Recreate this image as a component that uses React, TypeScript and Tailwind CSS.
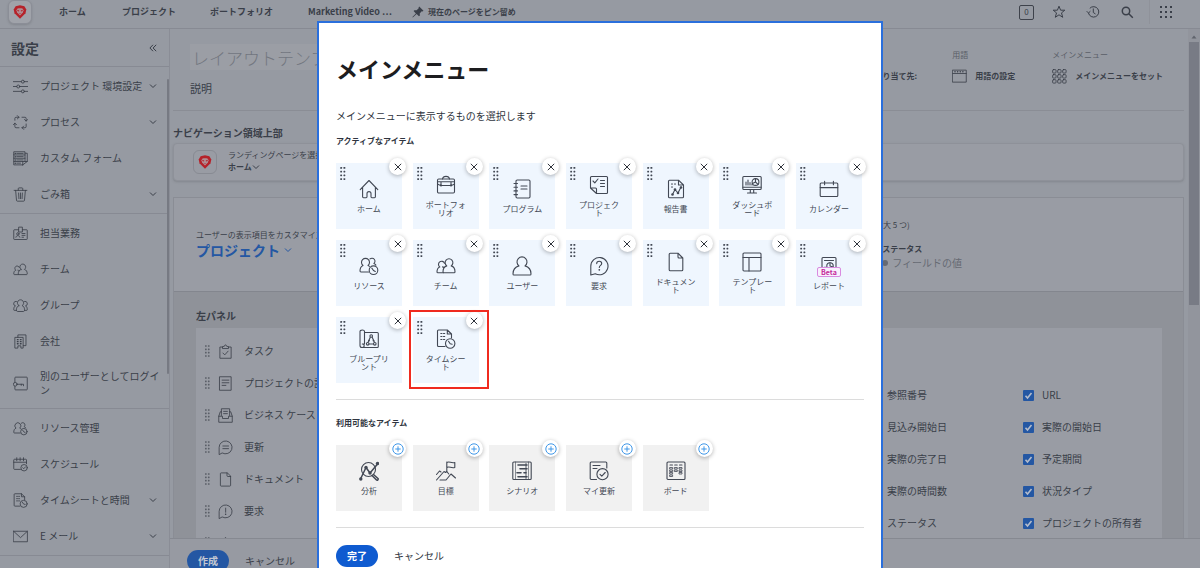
import React from "react";

type IconName = keyof typeof ICONS;

const dot = (x: number, y: number, r = 1) => <circle key={`${x}-${y}`} cx={x} cy={y} r={r} fill="currentColor" stroke="none" />;

const ICONS = {
  home: <path d="M1.2 10.6 10 1.5l8.8 9.1M3.6 8.6v9.2c0 .6.3.9.9.9h2.600c.6 0 .9-.3.9-.9v-3.200a2 2 0 0 1 4 0v3.200c0 .6.3.9.9.9h2.600c.6 0 .9-.3.9-.9V8.600" />,
  briefcase: (
    <>
      <rect x="1.500" y="4" width="17" height="14" rx="1.200" />
      <path d="M6.500 4c.3-1.800 1.500-2.600 3.500-2.600s3.200.8 3.500 2.600M1.500 6.800h17M1.800 9.200c1 1 2 1.300 3.500 1.300h9.400c1.500 0 2.500-.3 3.500-1.300M5 7v3.500M15 7v3.500" />
      {[dot(5, 10.5, 1.1), dot(15, 10.5, 1.1)]}
    </>
  ),
  notebook: (
    <>
      <rect x="4" y="1" width="14" height="18" rx="1.200" />
      <path d="M2 4.500h3.500M2 8.200h3.500M2 11.900h3.500M2 15.600h3.500M9 7h6M9 10h6" />
    </>
  ),
  checklist: (
    <>
      <path d="M1.500 13V2.500c0-.7.4-1 1-1h15c.6 0 1 .3 1 1v15c0 .6-.4 1-1 1H7.500L1.500 13h5c.7 0 1 .3 1 1v4.500" />
      <path d="m4 6 1.800 1.800L9 4M11.500 5.500h4M11.500 8.500h4M11.500 11.500h4" />
    </>
  ),
  report: (
    <>
      <path d="M12.500 1.200H3.500c-.6 0-1 .4-1 1v15.600c0 .6.4 1 1 1h13c.6 0 1-.4 1-1V6zM12.500 1.200V6h5M5.500 5h1M8.500 5h1M5.500 8h1" />
      <path d="m6.500 15.500 2.500-5 3 3.500 3-6" />
      {[dot(6.5, 15.5, 1.3), dot(9, 10.5, 1.3), dot(12, 14, 1.3), dot(15, 8.500, 1.3)]}
    </>
  ),
  dashboard: (
    <>
      <rect x="0.800" y="1.500" width="18.400" height="13" rx="1" />
      <path d="M1 12.300h18M8.300 14.500v3M11.700 14.500v3M5.500 18h9M4 10V7M6 10V5M8 10V7.500M10 10V9" />
      <circle cx="13.500" cy="7" r="3.400" />
      <path d="M13.500 3.600V7l2.500 2.300M13.500 7l-3 1.500" />
    </>
  ),
  calendar: (
    <>
      <rect x="1.200" y="4" width="17.600" height="13.500" rx="1" />
      <path d="M1.200 8.600h17.600M5.600 2.200v3.500M14.400 2.200v3.500" />
    </>
  ),
  resources: (
    <>
      <path d="M9.500 16H2c-.6 0-1-.3-1-.9 0-3 1-4.800 3-5.600a4 4 0 1 1 5 0c.6.2 1 .5 1.400.9M11 2.900a3 3 0 1 1 3.900 4.600c.9.300 1.500.800 2 1.600" />
      <circle cx="14.500" cy="14.200" r="4.300" />
      <path d="m12.800 12.200 1.700 2.300 1.800 1" />
    </>
  ),
  team: (
    <>
      <path d="M10.800 9.900a3.900 3.900 0 1 1 4.400 0c2.600.7 3.800 2.800 3.800 6 0 .6-.4.900-1 .9H8c-.6 0-1-.3-1-.9 0-3.200 1.200-5.300 3.800-6z" />
      <path d="M7.200 16.800H2c-.6 0-1-.3-1-.9 0-2.600.9-4.400 2.800-5a3.100 3.100 0 1 1 4.700-3.600M6.500 10.900c.6.100 1 .3 1.400.6" />
    </>
  ),
  user: <path d="M7 9.900a5 5 0 1 1 6 0c3.600 1 6 4 6 8 0 .7-.4 1.100-1 1.100H2c-.6 0-1-.4-1-1.100 0-4 2.400-7 6-8z" />,
  question: (
    <>
      <path d="M1.800 19V10.200a8.600 8.600 0 1 1 4.500 7.500z" />
      <path d="M7.700 7.600c0-1.400 1-2.300 2.500-2.300s2.500.9 2.500 2.200c0 1.900-2.400 1.900-2.400 4" />
      {dot(10.3, 13.8, 0.9)}
    </>
  ),
  document: <path d="M12 1.200H4.200c-.6 0-1 .4-1 1v15.600c0 .6.4 1 1 1h11.600c.6 0 1-.4 1-1V6zM12 1.200V5c0 .6.4 1 1 1h3.800" />,
  template: (
    <>
      <rect x="1" y="1" width="18" height="18" rx="1" />
      <path d="M1 5.500h18M7 5.500V19" />
    </>
  ),
  reportPage: (
    <>
      <path d="M3 14V2.500c0-.7.400-1 1-1h12c.6 0 1 .3 1 1V14M5.500 4.500h9" />
      <circle cx="11" cy="10" r="3.200" />
      <path d="M11 6.800V10l3 1M6 14v-3" />
    </>
  ),
  blueprint: (
    <>
      <path d="M5.500 3.500h12.800c.6 0 1 .4 1 1v13c0 .6-.4 1-1 1H3M5.500 15V2.500C5.500 1.600 4.600 1 3.300 1S1 1.600 1 2.500v14c0 1.200.8 2 2 2s2.200-.8 2.200-1.800c0-1-.8-1.700-1.900-1.700h2.200" />
      <path d="m11.200 8.500-2 4.500M13.300 8.500l2 4.500M10 15h4.500" />
      <circle cx="12.200" cy="7" r="1.300" />
      <circle cx="8.700" cy="14.800" r="1.300" />
      <circle cx="15.800" cy="14.800" r="1.300" />
      {[dot(10, 11.6, 0.9), dot(14.500, 11.600, 0.9)]}
    </>
  ),
  timesheet: (
    <>
      <path d="M9 17.500H2.500c-.6 0-1-.4-1-1V2c0-.6.4-1 1-1h8.800L15.500 5v4M11.300 1v4h4.200M4.800 4.500H6M7.500 4.500h1.200M4.800 7.500H6M7.500 7.500h1.200M4.800 10.500H6M7.500 10.500h1.200" />
      <circle cx="14.200" cy="14.500" r="4.700" />
      <path d="m12.500 12.300 1.700 2.500 2 .4" />
    </>
  ),
  analysis: (
    <>
      <circle cx="9.500" cy="8.500" r="7" />
      <path d="m14.500 13.500 4.500 4c.6 1-.6 2.200-1.500 1.500L13 14.500M1.500 18 7 6.500l4 5.500 8-9.500" strokeWidth="1.500" />
      {[dot(1.8, 18, 1.7), dot(7, 6.5, 1.7), dot(11, 12, 1.7), dot(18.500, 2.500, 1.700)]}
    </>
  ),
  goals: (
    <>
      <path d="M10.800 10.500V1M10.800 1.500c2.500-1.500 4.200 1 8 0v5c-3.800 1-5.500-1.500-8 0" />
      <path d="m.5 19 7.500-8.500 1.500 1 1.300-1 2 2.500M4 19h6l5-6 4.500 4M.5 13.500 3.500 10l1.500 1" />
    </>
  ),
  scenario: (
    <>
      <rect x="0.800" y="1" width="18.400" height="17.500" rx="1" />
      <path d="M3.500 1v17.500M16.500 1v17.500" strokeWidth="0.600" />
      <path d="M14 2.500v15" strokeWidth="0.900" />
      <path d="M6 4h9M6 15.800h9M8 7.800h7M5 11.800h4M12 11.800h2" strokeWidth="1.600" />
    </>
  ),
  updateCheck: (
    <>
      <path d="M7.500 18.500H2.200c-.6 0-1-.4-1-1V2c0-.6.4-1 1-1h14.600c.6 0 1 .4 1 1v5M4 4.500h7M4 7.500h4" />
      <circle cx="13.500" cy="13.200" r="5.600" />
      <path d="m11 13.300 1.800 1.800 3.400-3.600" />
    </>
  ),
  board: (
    <>
      <rect x="1" y="1" width="18" height="17.500" rx="1" />
      <path d="M4 4h2.500M8.700 4h2.500M13.500 4H16" />
      <g strokeWidth="0.800">
        {[6.5, 9, 11.5, 14].map((y) => <rect key={y} x="4" y={y} width="2.600" height="1.500" />)}
        {[6.5, 9].map((y) => <rect key={y} x="8.700" y={y} width="2.600" height="1.500" />)}
        {[6.5, 9, 11.5].map((y) => <rect key={y} x="13.400" y={y} width="2.600" height="1.500" />)}
      </g>
    </>
  ),
  sliders: (
    <>
      <path d="M0 3.500h11M15.500 3.500H20M0 10h5M9 10h11M0 16.500h11M15.500 16.500H20" />
      <circle cx="13.200" cy="3.500" r="2" />
      <circle cx="7" cy="10" r="2" />
      <circle cx="13.200" cy="16.500" r="2" />
    </>
  ),
  process: <path d="M2.500 7V4.500c0-1 .5-1.500 1.500-1.500h4M5.800.8 8 3 5.800 5.200M12 3h4c1 0 1.500.5 1.500 1.500V8M19.500 6l-2 2.200-2.200-2.200M17.500 12v3.500c0 1-.5 1.500-1.500 1.500h-4M14.200 14.800 12 17l2.200 2.200M8 17H4c-1 0-1.500-.5-1.500-1.500V11M.5 13l2-2.200 2.200 2.200" />,
  forms: (
    <>
      <path d="M16 14V1H1v4.300h15M1 5.300v4.400h15M1 9.700v4.300h12M1 14v4.500h12M16 3h3v11l-6 4.500M13 18.500V14h6" />
      <path d="M5 3.200h8.500M5 7.500h8.500M5 11.900h8.500M5 16.200h5" />
      {[dot(3, 3.2), dot(3, 7.5), dot(3, 11.9), dot(3, 16.2)]}
    </>
  ),
  trash: <path d="M1.500 4.500h17M7 4.500V2.200c0-.6.3-1 1-1h4c.7 0 1 .4 1 1v2.300M3.500 4.500l1.200 13.400c.1.700.5 1 1.100 1h8.400c.6 0 1-.3 1.100-1l1.200-13.400M7.500 8l.4 7.500M10 8v7.500M12.500 8l-.4 7.500" />,
  badge: (
    <>
      <path d="M7.500 5H1.800c-.5 0-.8.300-.8.800v11.400c0 .5.3.8.8.8h16.400c.5 0 .8-.3.8-.8V5.800c0-.5-.3-.8-.8-.8h-5.700M7.500 7.500V1.500h5v6z" />
      <circle cx="6.500" cy="10.500" r="1.600" />
      <path d="M3.800 15c.3-3 5-3 5.400 0M12 10h4M12 12.500h4M12 15h2" />
    </>
  ),
  group: (
    <>
      <path d="M7.800 10.200a4.200 4.200 0 1 1 4.400 0c2 .7 3.200 2.500 3.200 5.500 0 1.600-.5 2.300-1.500 2.300H6.100c-1 0-1.500-.7-1.500-2.300 0-3 1.200-4.800 3.200-5.500z" />
      <path d="M4.500 16.500H1.800c-.6 0-.8-.4-.8-1 0-2.500.6-4.200 2.300-5a3 3 0 0 1 1.300-6M15.500 16.500h2.700c.6 0 .8-.4.800-1 0-2.500-.6-4.200-2.300-5a3 3 0 0 0-1.300-6" />
    </>
  ),
  company: (
    <>
      <path d="M3 4.500h10.500v14.300h-3v-3h-4v3H3zM6.500 4.500V1.200h10.800v14.300h-3.500" />
      <path d="M5.800 7.500h1M9.800 7.500h1M5.800 10.200h1M9.800 10.200h1M5.800 13h1M9.800 13h1" strokeWidth="1.700" />
    </>
  ),
  key: (
    <>
      <path d="M2.500 8V2.500c0-.7.300-1 1-1h14.500c.7 0 1 .3 1 1v15c0 .7-.3 1-1 1H3.500c-.7 0-1-.3-1-1V14" />
      <circle cx="3" cy="11" r="2.500" />
      <path d="M5.500 11H14v2M11 11v1.500" />
    </>
  ),
  calendarCheck: (
    <>
      <path d="M10 16.500H2c-.6 0-1-.4-1-1V4c0-.6.400-1 1-1h15c.6 0 1 .4 1 1v5M1 7h17M5 1v4M9.500 1v4M14 1v4" />
      <circle cx="14.800" cy="14.300" r="4.300" />
      <path d="m13 14.300 1.300 1.400 2.400-2.600" />
    </>
  ),
  mail: <path d="M.8 3h18.400v14H.8zM.8 3l9.200 8.500L19.200 3" />,
  clipboard: <path d="M6 4H2.500v15h15V4H14M6 5.500V3.500L8.500 3c.3-2.400 2.700-2.400 3 0l2.500.5v2zM6.500 12l2.500 2.500 4.500-5" />,
  page: <path d="M2.500 1h15v18h-15zM5.500 5.500h9M5.500 9h9M5.500 12.500h5" />,
  inbox: <path d="M4.500 10V1h11v9M4.500 5H3L1 11v8h18v-8l-2-6h-1.500M1 11h5v3h8v-3h5M7.500 4.500h5M7.500 7.500h5" />,
  comment: <path d="M1.500 19v-9a8.600 8.600 0 1 1 4.500 7.500zM6.500 8h7.500M6.500 11.500h7.500" />,
  alert: (
    <>
      <path d="M1.500 19v-9a8.600 8.600 0 1 1 4.500 7.500zM10.200 5.500v5.500" />
      {dot(10.2, 13.5, 1)}
    </>
  ),
  caret: <path d="m3 8.500 7-6.500 7 6.500v9H3z" />,
  windowBar: (
    <>
      <path d="M1 1.500h18v16H1zM1 6h18" />
      {[dot(4, 3.8), dot(7.5, 3.8), dot(11, 3.8), dot(14.5, 3.8)]}
    </>
  ),
  nine: (
    <>
      {[0.8, 7.5, 14.2].map((y) => [0.8, 7.5, 14.2].map((x) => <rect key={`${x}-${y}`} x={x} y={y} width="4.600" height="4.600" rx="1.200" />))}
    </>
  ),
};

function Icon({ name, className = "size-5" }: { name: IconName; className?: string }) {
  return (
    <svg viewBox="0 0 20 20" className={`shrink-0 ${className}`} fill="none" stroke="currentColor" strokeWidth="1.100" strokeLinecap="round" strokeLinejoin="round" aria-hidden="true">
      {ICONS[name]}
    </svg>
  );
}

function Grip({ className = "" }: { className?: string }) {
  return (
    <svg viewBox="0 0 6 14" className={`shrink-0 ${className}`} fill="currentColor" aria-hidden="true">
      {[0, 4, 8, 12].map((y) => [0, 3.500].map((x) => <rect key={`${x}-${y}`} x={x} y={y} width="2" height="2" rx="0.500" />))}
    </svg>
  );
}

function Chevron({ className = "" }: { className?: string }) {
  return (
    <svg viewBox="0 0 8 8" className={`size-2 shrink-0 ${className}`} fill="none" stroke="currentColor" strokeWidth="1" aria-hidden="true">
      <path d="M1 2.500 4 5.500l3-3" />
    </svg>
  );
}

function Lion() {
  return (
    <svg viewBox="0 0 14 14" className="size-3.5" aria-hidden="true">
      <path d="M2.600 1.300 7 .3l4.400 1 1.900 3.200-.8 3.800L7 13.800 1.500 8.300.7 4.500z" fill="#b5222a" />
      <path d="M4.200 3.700 5.500 3.200h3l1.300.5.700 1.600-.6 2.200L7 10.600 4.100 7.500l-.6-2.200z" fill="#b08d93" />
      <path d="m4.200 4.800 2 .7-.4.900-1.300-.5zM9.800 4.800l-2 .7.400.9 1.300-.5zM6.200 7.900h1.600L7 8.900z" fill="#b5222a" />
    </svg>
  );
}

type NavItem = { label: string; icon: IconName; open?: boolean; tall?: boolean };

const sideGroups: NavItem[][] = [
  [
    { label: "プロジェクト 環境設定", icon: "sliders", open: true },
    { label: "プロセス", icon: "process", open: true },
    { label: "カスタム フォーム", icon: "forms" },
    { label: "ごみ箱", icon: "trash", open: true },
  ],
  [
    { label: "担当業務", icon: "badge" },
    { label: "チーム", icon: "team" },
    { label: "グループ", icon: "group" },
    { label: "会社", icon: "company" },
    { label: "別のユーザーとしてログイン", icon: "key", tall: true },
  ],
  [
    { label: "リソース管理", icon: "resources" },
    { label: "スケジュール", icon: "calendarCheck" },
    { label: "タイムシートと時間", icon: "timesheet", open: true },
    { label: "E メール", icon: "mail", open: true },
  ],
];

const panelItems: { label?: string; icon: IconName }[] = [
  { label: "タスク", icon: "clipboard" },
  { label: "プロジェクトの詳細", icon: "page" },
  { label: "ビジネス ケース", icon: "inbox" },
  { label: "更新", icon: "comment" },
  { label: "ドキュメント", icon: "document" },
  { label: "要求", icon: "alert" },
  { icon: "caret" },
];

const fields = ["参照番号", "URL", "見込み開始日", "実際の開始日", "実際の完了日", "予定期間", "実際の時間数", "状況タイプ", "ステータス", "プロジェクトの所有者"];

type TileItem = { label: string; icon: IconName; beta?: boolean; marked?: boolean };

const activeItems: TileItem[] = [
  { label: "ホーム", icon: "home" },
  { label: "ポートフォリオ", icon: "briefcase" },
  { label: "プログラム", icon: "notebook" },
  { label: "プロジェクト", icon: "checklist" },
  { label: "報告書", icon: "report" },
  { label: "ダッシュボード", icon: "dashboard" },
  { label: "カレンダー", icon: "calendar" },
  { label: "リソース", icon: "resources" },
  { label: "チーム", icon: "team" },
  { label: "ユーザー", icon: "user" },
  { label: "要求", icon: "question" },
  { label: "ドキュメント", icon: "document" },
  { label: "テンプレート", icon: "template" },
  { label: "レポート", icon: "reportPage", beta: true },
  { label: "ブループリント", icon: "blueprint" },
  { label: "タイムシート", icon: "timesheet", marked: true },
];

const availableItems: TileItem[] = [
  { label: "分析", icon: "analysis" },
  { label: "目標", icon: "goals" },
  { label: "シナリオ", icon: "scenario" },
  { label: "マイ更新", icon: "updateCheck" },
  { label: "ボード", icon: "board" },
];

function Header() {
  return (
    <header className="flex h-[29px] shrink-0 items-start border-b border-[#878a93] pr-6 pl-2 text-[#3a3f49]">
      <a href="#home" aria-label="ホームへ" className="grid size-6 place-items-center rounded-md border border-[#8b8e97] bg-[#a0a3aa] shadow-sm">
        <Lion />
      </a>
      <nav className="ml-[27px] flex h-6 items-center text-[9px] leading-4 font-bold whitespace-nowrap">
        <a href="#home" className="w-[63px]">ホーム</a>
        <a href="#projects" className="w-[88px]">プロジェクト</a>
        <a href="#portfolios" className="w-[98px]">ポートフォリオ</a>
        <a href="#video" className="w-[104px]">Marketing Video ⋯</a>
        <button type="button" className="flex items-center gap-1 text-[8px] font-bold">
          <svg viewBox="0 0 12 12" className="size-3" fill="currentColor" aria-hidden="true">
            <path d="M7.200.5 11.500 4.800l-1 .6-.8-.2-2 2.200.2 2.100-.9.800-2.400-2.400L.8 11.500l-.4-.4 3.500-3.700L1.600 5l.8-.8 2.200.1 2.100-2-.1-.900z" />
          </svg>
          現在のページをピン留め
        </button>
      </nav>
      <div className="ml-auto flex h-6 items-center">
        <button type="button" className="mr-[18px] grid size-[15px] place-items-center rounded-xs border border-[#3e424b] text-[8px] leading-none">0</button>
        <button type="button" aria-label="お気に入り" className="mr-5">
          <svg viewBox="0 0 14 14" className="size-3.5" fill="none" stroke="currentColor" strokeWidth="1" aria-hidden="true">
            <path d="m7 1.200 1.600 4h4.200L9.500 7.900l1.200 4.400L7 9.800l-3.700 2.500 1.200-4.400L1.200 5.200h4.200z" />
          </svg>
        </button>
        <button type="button" aria-label="履歴" className="mr-5">
          <svg viewBox="0 0 14 14" className="size-3.5" fill="none" stroke="currentColor" strokeWidth="1" aria-hidden="true">
            <path d="M2.500 8A5.200 5.200 0 1 0 3.800 3.300M.7 6.200 2.500 8l1.900-1.800M7.300 3.500v4l2.200 1.500" />
          </svg>
        </button>
        <button type="button" aria-label="検索">
          <svg viewBox="0 0 14 14" className="size-3.5" fill="none" stroke="currentColor" strokeWidth="1.500" aria-hidden="true">
            <circle cx="6" cy="6" r="3.700" />
            <path d="m8.800 8.800 4 4" />
          </svg>
        </button>
        <span className="mr-1.5 ml-[15px] h-6 w-px bg-[#8f929a]" />
        <button type="button" aria-label="メインメニュー" className="p-1">
          <svg viewBox="0 0 12 12" className="size-3" fill="currentColor" aria-hidden="true">
            {[0, 5, 10].map((y) => [0, 5, 10].map((x) => <rect key={`${x}-${y}`} x={x} y={y} width="2" height="2" />))}
          </svg>
        </button>
      </div>
    </header>
  );
}

function Sidebar() {
  return (
    <aside className="relative w-[170px] shrink-0 overflow-hidden border-r border-[#8a8d96] text-[#3a3f49]">
      <div className="flex h-[38px] items-center justify-between border-b border-[#878a93] pr-3 pl-[11px]">
        <h2 className="text-sm leading-5 font-bold">設定</h2>
        <button type="button" aria-label="閉じる">
          <svg viewBox="0 0 8 8" className="size-2" fill="none" stroke="currentColor" strokeWidth="1" aria-hidden="true">
            <path d="M4 .8.900 4 4 7.200M7.200.8 4.100 4l3.100 3.200" />
          </svg>
        </button>
      </div>
      {sideGroups.map((group, i) => (
        <ul key={i} className="border-b border-[#878a93] py-px">
          {group.map((item) => (
            <li key={item.label}>
              <a href="#settings" className={`flex items-center pl-[13px] text-[10px] leading-[14px] ${item.tall ? "h-12 pr-2" : "h-9 pr-3"}`}>
                <Icon name={item.icon} className="mr-3 size-[15px]" />
                <span className="flex-1 break-all">{item.label}</span>
                {item.open && <Chevron />}
              </a>
            </li>
          ))}
        </ul>
      ))}
      <div className="absolute top-[50px] right-0 h-[295px] w-0.5 rounded bg-[#777a83]" />
    </aside>
  );
}

function Content() {
  return (
    <div className="min-w-0 flex-1 pr-1 pl-[3px] text-[#3a3f49]">
      <section className="flex h-[82px] justify-between border-b border-[#8a8d95] pr-[21px] pl-[17px]">
        <div className="pt-[15px]">
          <input aria-label="レイアウトテンプレート名" placeholder="レイアウトテンプレートの名前" className="block h-[26px] w-64 bg-[#9b9ea5] px-0.5 text-[17px] font-light outline-none placeholder:text-[#72767f]" />
          <p className="pt-2.5 text-[11px] leading-4">説明</p>
        </div>
        <div className="flex items-end pb-[26px] text-[8px] leading-3">
          <p className="mr-[35px] font-bold leading-4">割り当て先:</p>
          <div className="mr-[37px]">
            <p className="text-[#5a5e67]">用語</p>
            <button type="button" className="mt-[7px] flex items-center gap-2 font-bold leading-4">
              <Icon name="windowBar" className="size-[15px]" />用語の設定
            </button>
          </div>
          <div>
            <p className="text-[#5a5e67]">メインメニュー</p>
            <button type="button" className="mt-[7px] flex items-center gap-2 font-bold leading-4">
              <Icon name="nine" className="size-[15px]" />メインメニューをセット
            </button>
          </div>
        </div>
      </section>
      <h3 className="pt-[13px] text-[10px] leading-[18px] font-bold">ナビゲーション領域上部</h3>
      <section className="mt-px flex h-[38px] items-center gap-[11px] rounded-sm border border-[#8e9199] bg-[#999ca4] pl-[19px] shadow-sm">
        <span className="grid size-6 place-items-center rounded-md border border-[#888b93]">
          <Lion />
        </span>
        <div className="pb-[3px] text-[8px] leading-3">
          <p>ランディングページを選択してください</p>
          <button type="button" className="flex items-center font-bold">ホーム<Chevron /></button>
        </div>
      </section>
      <section className="mt-4 border border-[#8a8d95]">
        <div className="flex h-[94px] justify-between border-b border-[#83868e] bg-[#999ca4] pr-[221px] pl-[22px]">
          <div className="pt-[31px]">
            <p className="text-[8px] leading-3">ユーザーの表示項目をカスタマイズ</p>
            <button type="button" className="flex items-center gap-1 text-sm leading-[18px] font-bold text-[#2457a3]">
              プロジェクト<Chevron />
            </button>
          </div>
          <div className="pt-[21px] text-[8px]">
            <p className="leading-3">(最大 5 つ)</p>
            <p className="mt-3 pl-2.5 leading-3 font-bold">ステータス</p>
            <p className="flex items-center gap-1 pl-2.5 text-[10px] leading-4 text-[#666a73]">
              <span className="size-1.5 rounded-full bg-[#666a73]" />フィールドの値
            </p>
          </div>
        </div>
        <div className="bg-[#8f9299] pt-4 pr-[21px] pl-[22px]">
          <h3 className="text-[10px] leading-4 font-bold">左パネル</h3>
          <div className="mt-1 flex h-[300px] justify-between bg-[#999ca4]">
            <ul className="pt-[7px] pl-[9px]">
              {panelItems.map((item) => (
                <li key={item.icon} className="flex h-8 items-center text-[10px] leading-4">
                  <Grip className="mr-2 h-3 w-[5px] text-[#5a5e67]" />
                  <Icon name={item.icon} className="mr-[11px] size-[15px]" />
                  {item.label}
                </li>
              ))}
            </ul>
            <div className="grid h-fit grid-cols-[155px_139px] pt-[51px]">
              {fields.map((field) => (
                <label key={field} className="flex h-8 items-center gap-2 text-[10px] leading-4">
                  <span className="grid">
                    <input type="checkbox" defaultChecked className="col-start-1 row-start-1 size-[11px] appearance-none rounded-[1px] bg-[#2457a3]" />
                    <svg viewBox="0 0 11 11" className="pointer-events-none col-start-1 row-start-1 size-[11px]" fill="none" stroke="#b4bccb" strokeWidth="1.600" aria-hidden="true">
                      <path d="M2.500 5.800 4.500 8l4-5" />
                    </svg>
                  </span>
                  {field}
                </label>
              ))}
            </div>
          </div>
        </div>
      </section>
    </div>
  );
}

function Tile({ item, kind }: { item: TileItem; kind: "active" | "available" }) {
  const active = kind === "active";
  return (
    <li className={`relative flex h-[66px] flex-col items-center justify-center gap-1.5 text-[#424854] ${active ? "bg-[#eff6fe]" : "bg-[#f1f1f1]"}`}>
      {active && <Grip className="absolute top-1 left-1 h-[13px] w-1.5" />}
      <span className="relative grid place-items-center">
        <Icon name={item.icon} />
        {item.beta && (
          <span className="absolute top-[11px] rounded-xs border border-[#d98be0] bg-[#f8f0fd] px-[3px] text-[7px] leading-2 font-bold text-[#c42a9a]">Beta</span>
        )}
      </span>
      <span className="w-11 text-center text-[8px] leading-2 break-all">{item.label}</span>
      <button
        type="button"
        aria-label={active ? `${item.label}を削除` : `${item.label}を追加`}
        className="absolute -top-[5px] -right-1 grid size-[17px] place-items-center rounded-full bg-white text-[#30343c] shadow-[0_1px_4px_rgba(0,0,0,0.3)]"
      >
        {active ? (
          <svg viewBox="0 0 8 8" className="size-2" fill="none" stroke="currentColor" strokeWidth="1" aria-hidden="true">
            <path d="m.8.800 6.400 6.400M7.200.8.800 7.200" />
          </svg>
        ) : (
          <svg viewBox="0 0 12 12" className="size-3 text-[#3f97e8]" fill="none" stroke="currentColor" strokeWidth="1" aria-hidden="true">
            <circle cx="6" cy="6" r="5.200" />
            <path d="M6 3.300v5.400M3.300 6h5.400" />
          </svg>
        )}
      </button>
      {item.marked && <span className="pointer-events-none absolute -top-[7px] -right-[10px] -bottom-1.5 -left-1 border-2 border-[#f02b1f]" />}
    </li>
  );
}

function MenuDialog() {
  return (
    <div className="absolute inset-0 flex items-start justify-center pt-[21px]">
      <div role="dialog" aria-labelledby="menu-title" className="w-[566px] border-2 border-[#2a6fdc] bg-white px-[17px] pt-[29px] pb-5 text-[#2f3540]">
        <h1 id="menu-title" className="text-[22px] leading-8 font-bold text-[#1d1d1f]">メインメニュー</h1>
        <p className="mt-6 text-[10px] leading-4">メインメニューに表示するものを選択します</p>
        <h2 className="mt-[9px] text-[8px] leading-4 font-bold">アクティブなアイテム</h2>
        <ul className="mt-3.5 grid grid-cols-[repeat(7,66px)] justify-between gap-y-[11px] pr-0.5">
          {activeItems.map((item) => <Tile key={item.label} item={item} kind="active" />)}
        </ul>
        <hr className="mt-4 border-[#dcdcdc]" />
        <h2 className="mt-[15px] text-[8px] leading-4 font-bold">利用可能なアイテム</h2>
        <ul className="mt-3.5 grid grid-cols-[repeat(7,66px)] justify-between pr-0.5">
          {availableItems.map((item) => <Tile key={item.label} item={item} kind="available" />)}
        </ul>
        <hr className="mt-4 border-[#dcdcdc]" />
        <div className="mt-[17px] flex items-center gap-4 text-[10px] leading-4">
          <button type="button" className="h-[22px] rounded-full bg-[#0f5bd0] px-[11px] font-bold text-white">完了</button>
          <button type="button" className="text-[#2f3540]">キャンセル</button>
        </div>
      </div>
    </div>
  );
}

export default function App() {
  return (
    <div className="relative flex h-screen flex-col overflow-hidden bg-[#969aa2] font-['Noto_Sans_CJK_JP',sans-serif]">
      <Header />
      <div className="flex min-h-0 flex-1">
        <Sidebar />
        <main className="flex min-w-0 flex-1 flex-col">
          <div className="flex min-h-0 flex-1 overflow-hidden">
            <Content />
            <div className="flex w-3 flex-col items-center bg-[#92959d] pt-1">
              <svg viewBox="0 0 8 8" className="size-2" fill="#60646d" aria-hidden="true">
                <path d="M1.500 5.500 4 2.500l2.500 3z" />
              </svg>
              <div className="mt-px h-[263px] w-2.5 bg-[#787b85]" />
            </div>
          </div>
          <footer className="flex h-[30px] shrink-0 items-start gap-4 border-t border-[#868991] bg-[#979aa2] pt-[11px] pl-[17px] text-[10px] leading-[22px] text-[#3a3f49]">
            <button type="button" className="rounded-full bg-[#2457a3] px-[11px] font-bold text-[#c3c8d2]">作成</button>
            <button type="button">キャンセル</button>
          </footer>
        </main>
      </div>
      <MenuDialog />
    </div>
  );
}
